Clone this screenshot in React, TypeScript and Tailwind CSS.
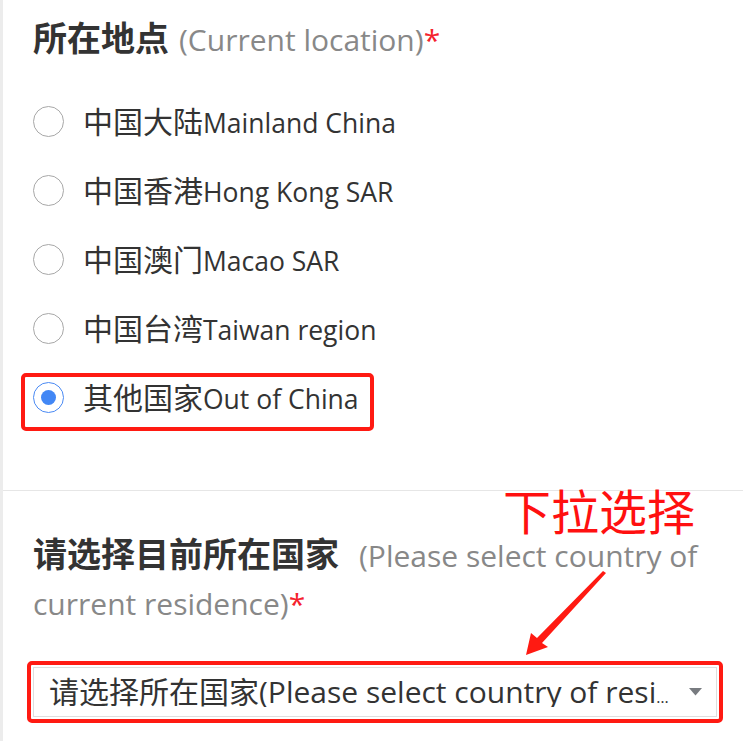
import React from 'react';

const FONT = "font-['Open_Sans','Noto_Sans_CJK_SC',sans-serif]";

const OPTIONS = [
  { zh: '中国大陆', en: 'Mainland China' },
  { zh: '中国香港', en: 'Hong Kong SAR' },
  { zh: '中国澳门', en: 'Macao SAR' },
  { zh: '中国台湾', en: 'Taiwan region' },
  { zh: '其他国家', en: 'Out of China' },
];

const Radio = ({ checked }: { checked: boolean }) => (
  <div
    className={`w-[31px] h-[31px] rounded-full border flex items-center justify-center shrink-0 ${
      checked ? 'border-[#4a8af4]' : 'border-[#a8a8a8]'
    }`}
  >
    {checked && <div className="w-[15px] h-[15px] rounded-full bg-[#4287f5]" />}
  </div>
);

const OptionRow = ({ zh, en, checked }: { zh: string; en: string; checked: boolean }) => (
  <div className="relative h-[69px] flex items-center gap-[19px]">
    <Radio checked={checked} />
    <span className="text-[#333] leading-none whitespace-nowrap">
      <span className="text-[30px]">{zh}</span>
      <span className="text-[26.5px]">{en}</span>
    </span>
    {checked && (
      <div className="absolute -left-[12px] top-[10px] w-[353px] h-[58px] border-4 border-[#ff1a12] rounded-[5px] pointer-events-none" />
    )}
  </div>
);

export default function App() {
  return (
    <div className={`relative flex w-full min-h-[741px] bg-white overflow-hidden ${FONT}`}>
      <div className="w-[3px] shrink-0 bg-[#ececec]" />
      <div className="flex-1 min-w-0">
        {/* current location */}
        <div className="pl-[30px] pr-[26px] pt-[15px]">
          <h2 className="text-[34px] leading-[46px] text-[#333]">
            <span className="font-bold">所在地点</span>
            <span className="text-[30px] text-[#888] ml-[10px]">(Current location)</span>
            <span className="text-[30px] text-[#f5222d]">*</span>
          </h2>
          <div className="mt-[24px]">
            {OPTIONS.map((o, i) => (
              <OptionRow key={i} zh={o.zh} en={o.en} checked={i === OPTIONS.length - 1} />
            ))}
          </div>
        </div>

        <div className="mt-[58px] h-px bg-[#e6e6e6]" />

        {/* country select */}
        <div className="pl-[30px] pr-[26px] pt-[40px]">
          <h2 className="text-[34px] leading-[46px] text-[#333]">
            <span className="font-bold">请选择目前所在国家</span>
            <span className="text-[30px] text-[#888] ml-[20px]">(Please select country of current residence)</span>
            <span className="text-[30px] text-[#f5222d]">*</span>
          </h2>
          <div className="relative mt-[40px]">
            <div className="h-[50px] border border-[#dedede] flex items-center pl-[15px] pr-[14px] gap-[10px]">
              <span className="flex-1 min-w-0 truncate text-[#333] leading-none">
                <span className="text-[30px]">请选择所在国家</span>
                <span className="text-[30px]">(Please select country of residence)</span>
              </span>
              <svg width="13" height="8" viewBox="0 0 13 8" className="shrink-0">
                <polygon points="0,0 13,0 6.5,7.5" fill="#787b80" />
              </svg>
            </div>
            <div className="absolute -inset-[6px] border-4 border-[#ff1a12] rounded-[5px] pointer-events-none" />
          </div>
        </div>
      </div>

      {/* annotation */}
      <div className="absolute left-[503px] top-[482px] text-[48px] leading-[60px] text-[#ff1010] pointer-events-none">
        下拉选择
      </div>
      <svg className="absolute inset-0 pointer-events-none" width="743" height="741" viewBox="0 0 743 741">
        <polygon
          points="526,655 531,633 537,638 603,571 606,573 542,643 548,647"
          fill="#ff1a12"
        />
      </svg>
    </div>
  );
}
